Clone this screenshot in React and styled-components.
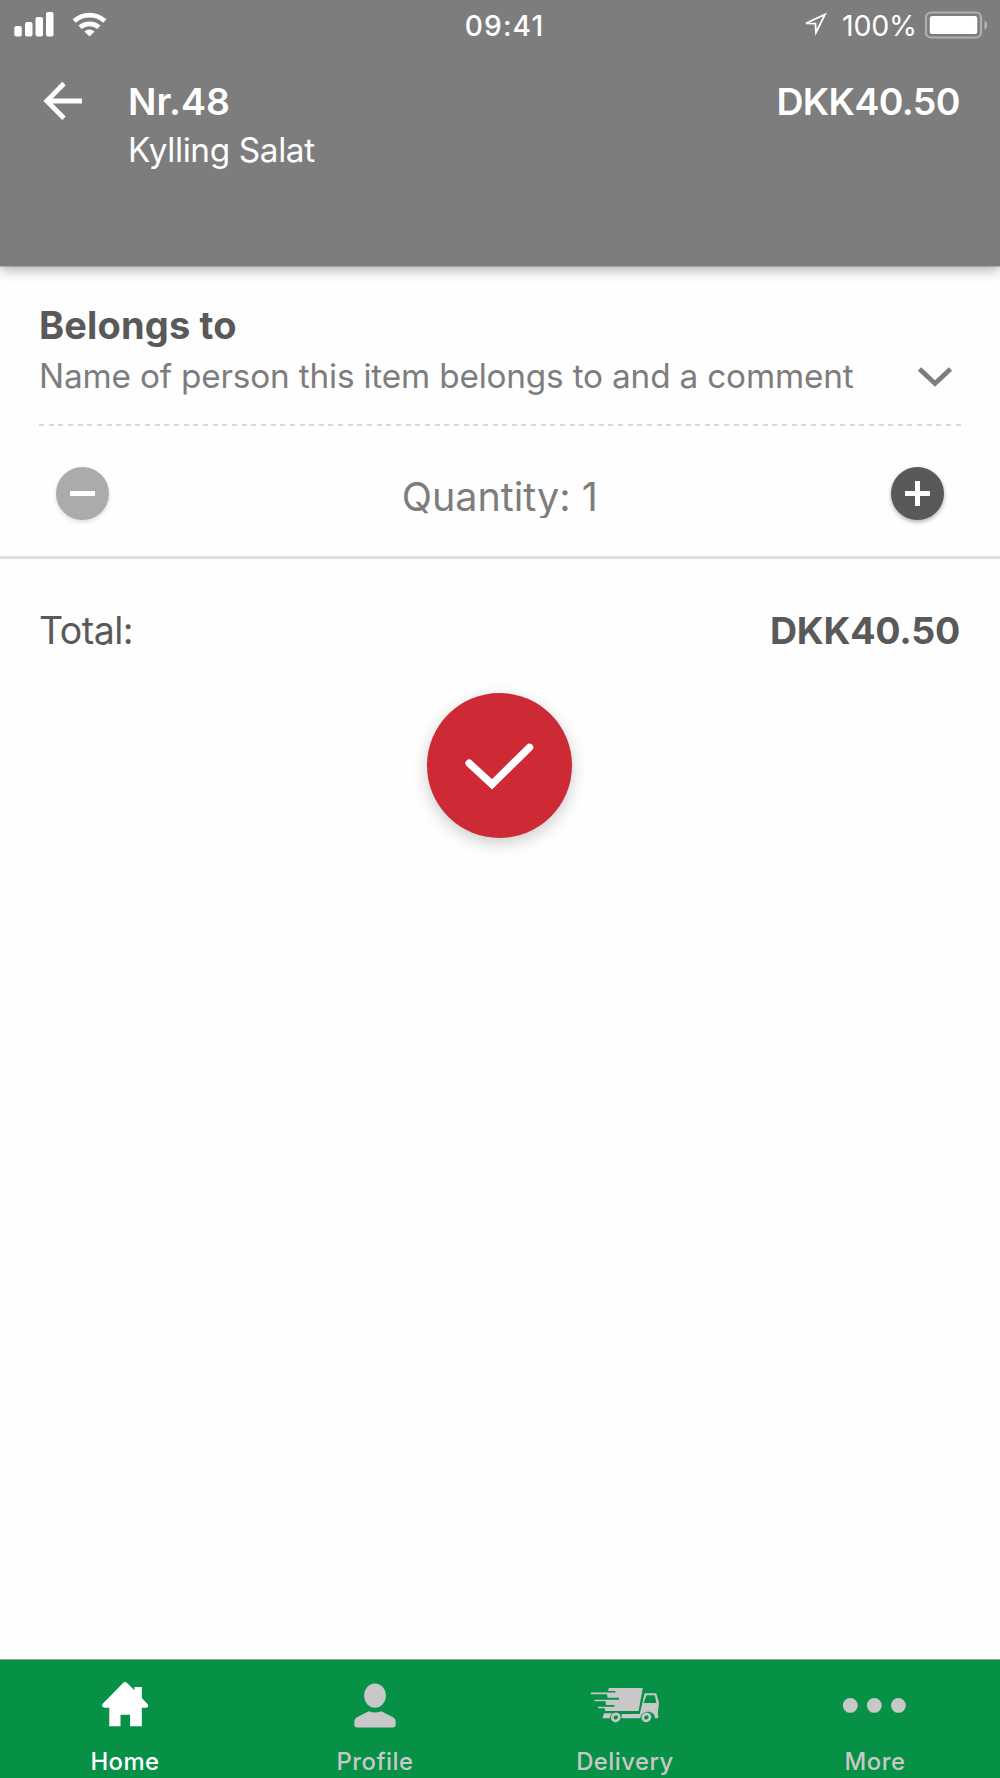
import React from "react";
import styled, { createGlobalStyle } from "styled-components";

const palette = {
  header: "#7d7d7d",
  dark: "#595959",
  text: "#7d7d7d",
  disabled: "#ababab",
  line: "#e0e0e0",
  dash: "#d8d8d8",
  red: "#cd2a36",
  green: "#069147",
  tab: "#c8c8c8",
};

const GlobalStyle = createGlobalStyle`
  * {
    box-sizing: border-box;
  }

  body {
    margin: 0;
    background: #fff;
    font-family: Inter, "Liberation Sans", sans-serif;
  }

  svg {
    display: block;
    flex: none;
  }

  button {
    border: 0;
    padding: 0;
    font: inherit;
  }
`;

const Screen = styled.div`
  display: flex;
  flex-direction: column;
  width: 1000px;
  height: 1778px;
  overflow: hidden;
  background: #fefefe;
`;

const Header = styled.header`
  flex: none;
  height: 266px;
  color: #fff;
  background: ${palette.header};
  box-shadow: 0 1px 1px rgba(110, 125, 140, 0.4), 0 4px 12px rgba(0, 0, 0, 0.3);
`;

const StatusBar = styled.div`
  display: grid;
  grid-template-columns: 1fr auto 1fr;
  align-items: center;
  height: 51px;
  padding: 0 12px 0 14px;
`;

const StatusGroup = styled.div`
  display: flex;
  align-items: center;
  justify-content: ${({ $end }) => ($end ? "flex-end" : "flex-start")};
  gap: ${({ $end }) => ($end ? 0 : "18px")};
  padding-bottom: 2px;
`;

const Time = styled.span`
  margin-left: 7px;
  font-size: 28.2px;
  font-weight: 500;
  line-height: 34px;
  letter-spacing: 1.1px;
`;

const Percent = styled.span`
  margin: 2px 7px 0 14px;
  font-size: 28.6px;
  line-height: 34px;
  letter-spacing: -0.2px;
`;

const TitleBar = styled.div`
  display: flex;
  align-items: flex-start;
  padding: 28px 40px 0 43px;
`;

const BackButton = styled.button`
  margin-top: 2px;
  color: #fff;
  background: none;
`;

const Titles = styled.div`
  flex: 1;
  margin-left: 45px;
`;

const Title = styled.h1`
  margin: 0;
  font-size: 37.5px;
  font-weight: 600;
  line-height: 46px;
`;

const Price = styled.span`
  font-size: 37.5px;
  font-weight: 600;
  line-height: 46px;
  letter-spacing: -0.6px;
`;

const Subtitle = styled.p`
  margin: 4px 0 0;
  font-size: 33.3px;
  line-height: 42px;
  letter-spacing: -0.35px;
`;

const BelongsTo = styled.section`
  display: flex;
  align-items: flex-end;
  justify-content: space-between;
  flex: none;
  height: 133px;
  margin: 0 39px;
`;

const SectionTitle = styled.h2`
  margin: 0;
  color: ${palette.dark};
  font-size: 38px;
  font-weight: 700;
  line-height: 50px;
  letter-spacing: 0.15px;
`;

const Hint = styled.p`
  margin: 3px 0 0;
  color: ${palette.text};
  font-size: 33.3px;
  line-height: 46px;
  letter-spacing: -0.17px;
  white-space: nowrap;
`;

const Chevron = styled.svg`
  margin: 0 8px 11px 0;
`;

const Dashes = styled.div`
  flex: none;
  height: 2px;
  margin: 25px 39px 0;
  background: repeating-linear-gradient(
    90deg,
    ${palette.dash} 0 5px,
    transparent 5px 9.65px
  );
`;

const QuantityRow = styled.section`
  display: flex;
  align-items: flex-start;
  justify-content: space-between;
  flex: none;
  height: 133px;
  padding: 41px 56px 0 55.5px;
  border-bottom: 3px solid ${palette.line};
`;

const RoundButton = styled.button`
  display: grid;
  place-items: center;
  width: 53px;
  height: 53px;
  border-radius: 50%;
  color: #fff;
  background: ${({ $muted }) => ($muted ? palette.disabled : palette.dark)};
  box-shadow: 0 2px 4px rgba(0, 0, 0, ${({ $muted }) => ($muted ? 0.14 : 0.32)});
`;

/* the label box is short, so descenders are cut at its lower edge */
const Quantity = styled.span`
  height: 51px;
  overflow: hidden;
  color: ${palette.text};
  font-size: 39.5px;
  line-height: 60px;
`;

const TotalRow = styled.section`
  display: flex;
  justify-content: space-between;
  flex: none;
  padding: 47px 40px 0 39px;
  color: ${palette.dark};
  font-size: 37.5px;
  line-height: 50px;
  letter-spacing: -0.5px;
`;

const Amount = styled.strong`
  font-weight: 700;
  letter-spacing: -0.25px;
`;

const ConfirmButton = styled.button`
  display: grid;
  place-items: center;
  align-self: center;
  flex: none;
  width: 145px;
  height: 145px;
  margin: 36.5px 0.5px 0 0;
  border-radius: 50%;
  background: ${palette.red};
  box-shadow: 0 5px 16px rgba(0, 0, 0, 0.2);
`;

const TabBar = styled.nav`
  display: grid;
  grid-template-columns: repeat(4, 1fr);
  flex: none;
  height: 119px;
  margin-top: auto;
  background: ${palette.green};
  border-top: 1px solid #7fa88c;
`;

const Tab = styled.a`
  display: flex;
  flex-direction: column;
  align-items: center;
  color: ${({ $active }) => ($active ? "#fff" : palette.tab)};
`;

const TabIcon = styled.span`
  display: grid;
  place-items: center;
  height: 50px;
  margin-top: 20px;
`;

const TabLabel = styled.span`
  margin-top: 17px;
  font-size: 23.8px;
  font-weight: 450;
  line-height: 30px;
  letter-spacing: 0.5px;
`;

const Signal = () => (
  <svg width="40" height="25" viewBox="0 0 40 25" fill="currentColor">
    <rect x="0.3" y="14" width="7.5" height="10.5" rx="2" />
    <rect x="11" y="10" width="7.5" height="14.5" rx="2" />
    <rect x="21.5" y="5" width="7.5" height="19.5" rx="2" />
    <rect x="32" y="0" width="7.5" height="24.5" rx="2" />
  </svg>
);

const Wifi = () => (
  <svg width="36" height="25" viewBox="0 0 36 25">
    <g fill="none" stroke="currentColor" strokeWidth="4.8">
      <path d="M2.2 9.1a22.6 22.6 0 0 1 30.6 0" />
      <path d="M8.1 15.3a14.3 14.3 0 0 1 18.8 0" />
    </g>
    <path d="M12.4 19.4a8.3 8.3 0 0 1 10.2 0l-5.1 5.1z" fill="currentColor" />
  </svg>
);

const Location = () => (
  <svg width="26" height="25" viewBox="0 0 26 25">
    <path
      d="M4 11.3L23 2.4L14 20.5L13.4 11.6z"
      fill="none"
      stroke="currentColor"
      strokeWidth="1.8"
    />
  </svg>
);

const Battery = () => (
  <svg width="64" height="28" viewBox="0 0 64 28">
    <rect
      x="2"
      y="1.5"
      width="55"
      height="25"
      rx="5"
      fill="none"
      stroke="#b0b0b0"
      strokeWidth="2.2"
    />
    <rect x="5.8" y="5" width="47.5" height="18" rx="2.5" fill="currentColor" />
    <path d="M60.5 9.5c3.6 1.6 3.6 7.6 0 9.2z" fill="#b5b5b5" />
  </svg>
);

const BackArrow = () => (
  <svg width="40" height="40" viewBox="0 0 40 40">
    <path
      d="M39 20H5M21 2.5L3.8 20L21 37.3"
      fill="none"
      stroke="currentColor"
      strokeWidth="4.8"
    />
  </svg>
);

const Home = () => (
  <svg width="48" height="46" viewBox="0 0 48 46" fill="currentColor">
    <path d="M24 0q1.1 0 2 .9L33.5 8.2V4.9H40.8V16L46.5 22Q48.4 25.5 44.9 25.7H40.8V44.3H29V32.8H19.5V44.3H8.3V25.7H3.5Q0 25.5 1.5 22L22 .9Q22.9 0 24 0z" />
  </svg>
);

const Person = () => (
  <svg width="42" height="45" viewBox="0 0 42 45" fill="currentColor">
    <ellipse cx="21" cy="12.6" rx="10.9" ry="12.2" />
    <path d="M14.8 28.3Q21 30.8 27.2 28.3L39.5 34.6Q41.7 36 41.7 38.4V41.5Q41.7 44.5 38.7 44.5H3.3Q.3 44.5.3 41.5V38.4Q.3 36 2.5 34.6z" />
  </svg>
);

const Truck = () => (
  <svg width="70" height="36" viewBox="0 0 70 36" fill="currentColor">
    <path d="M19 1H52.8L48.6 24H15.2L14.6 21.3H8V19.7H24.5V18H16L15.5 14.3H4.5V12.7H29V10.7H17.5L17 7.3H.8V5.5H25.5V4H18z" />
    <path
      fillRule="evenodd"
      d="M54.6 6.3H66.2L69 15.5L67.9 25.5L68.3 30.7L66.8 31.3H65C65.2 22.5 51 22.5 50.4 31.3H31.5L31.8 27H49.8zM56.6 8.3L53.6 16H66.4L64.8 8.3z"
    />
    <path d="M14 26.2H22.6Q19.9 28 19.6 31.3H12.5z" />
    <g fill="none" stroke="currentColor" strokeWidth="2.7">
      <ellipse cx="25.8" cy="30.4" rx="3.7" ry="3.3" transform="rotate(-35 25.8 30.4)" />
      <ellipse cx="56.4" cy="30.4" rx="3.7" ry="3.3" transform="rotate(-35 56.4 30.4)" />
    </g>
  </svg>
);

const Dots = () => (
  <svg width="64" height="16" viewBox="0 0 64 16" fill="currentColor">
    <circle cx="7.3" cy="8.4" r="7.4" />
    <circle cx="31.3" cy="8.4" r="7.4" />
    <circle cx="55.4" cy="8.4" r="7.4" />
  </svg>
);

const tabs = [
  { label: "Home", icon: Home, active: true },
  { label: "Profile", icon: Person },
  { label: "Delivery", icon: Truck },
  { label: "More", icon: Dots },
];

const App = () => {
  return (
    <>
      <GlobalStyle />
      <Screen>
        <Header>
          <StatusBar>
            <StatusGroup>
              <Signal />
              <Wifi />
            </StatusGroup>
            <Time>09:41</Time>
            <StatusGroup $end>
              <Location />
              <Percent>100%</Percent>
              <Battery />
            </StatusGroup>
          </StatusBar>
          <TitleBar>
            <BackButton aria-label="Back">
              <BackArrow />
            </BackButton>
            <Titles>
              <Title>Nr.48</Title>
              <Subtitle>Kylling Salat</Subtitle>
            </Titles>
            <Price>DKK40.50</Price>
          </TitleBar>
        </Header>

        <BelongsTo>
          <div>
            <SectionTitle>Belongs to</SectionTitle>
            <Hint>Name of person this item belongs to and a comment</Hint>
          </div>
          <Chevron width="36" height="22" viewBox="0 0 36 22">
            <path
              d="M2.5 3L18 17.5L33.5 3"
              fill="none"
              stroke={palette.text}
              strokeWidth="4.8"
            />
          </Chevron>
        </BelongsTo>
        <Dashes />

        <QuantityRow>
          <RoundButton $muted aria-label="Less">
            <svg width="25" height="25" viewBox="0 0 25 25">
              <path d="M0 12.5H25" stroke="currentColor" strokeWidth="5" />
            </svg>
          </RoundButton>
          <Quantity>Quantity: 1</Quantity>
          <RoundButton aria-label="More">
            <svg width="25" height="25" viewBox="0 0 25 25">
              <path d="M0 12.5H25M12.5 0V25" stroke="currentColor" strokeWidth="5" />
            </svg>
          </RoundButton>
        </QuantityRow>

        <TotalRow>
          <span>Total:</span>
          <Amount>DKK40.50</Amount>
        </TotalRow>
        <ConfirmButton aria-label="Confirm">
          <svg width="70" height="50" viewBox="0 0 70 50">
            <path
              d="M4.2 23.3L27 44.3L64.5 7.4"
              fill="none"
              stroke="#fff"
              strokeWidth="7.5"
              strokeLinecap="round"
            />
          </svg>
        </ConfirmButton>

        <TabBar>
          {tabs.map(({ label, icon: Icon, active }) => (
            <Tab key={label} $active={active}>
              <TabIcon>
                <Icon />
              </TabIcon>
              <TabLabel>{label}</TabLabel>
            </Tab>
          ))}
        </TabBar>
      </Screen>
    </>
  );
};

export default App;
